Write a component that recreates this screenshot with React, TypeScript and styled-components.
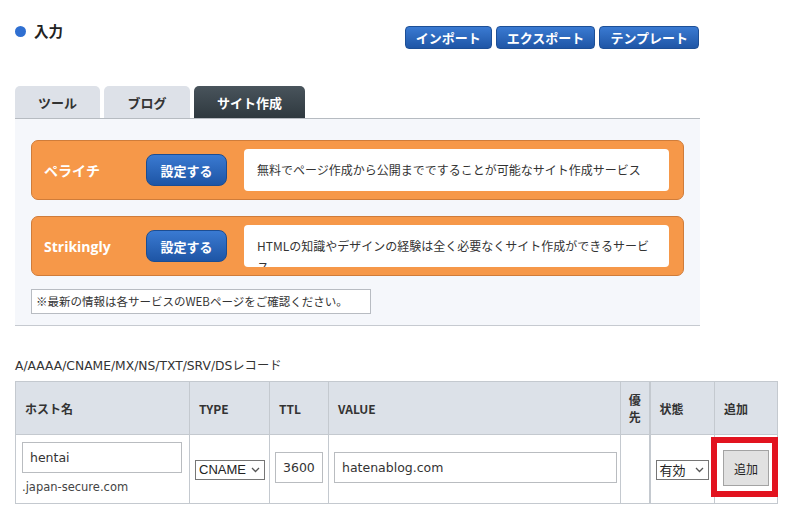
import React from 'react';
import styled, { createGlobalStyle } from 'styled-components';

const GlobalStyle = createGlobalStyle`
  body {
    margin: 0;
    background: #ffffff;
    font-family: 'DejaVu Sans', 'Noto Sans CJK JP', sans-serif;
    color: #333333;
  }
`;

const jp = `'Noto Sans CJK JP', 'DejaVu Sans', sans-serif`;

const services = [
  {
    name: 'ペライチ',
    latin: false,
    text: '無料でページ作成から公開までですることが可能なサイト作成サービス',
  },
  {
    name: 'Strikingly',
    latin: true,
    text: 'HTMLの知識やデザインの経験は全く必要なくサイト作成ができるサービス',
  },
];

const Chevron = () => (
  <svg width="9" height="6" viewBox="0 0 9 6">
    <polyline points="1,1 4.5,4.5 8,1" fill="none" stroke="#555" strokeWidth="1.3" />
  </svg>
);

export default function App() {
  return (
    <Page>
      <GlobalStyle />
      <HeaderRow>
        <Title>
          <Dot />
          入力
        </Title>
        <ButtonGroup>
          <BlueButton>インポート</BlueButton>
          <BlueButton>エクスポート</BlueButton>
          <BlueButton>テンプレート</BlueButton>
        </ButtonGroup>
      </HeaderRow>

      <TabBar>
        <Tab $w={85}>ツール</Tab>
        <Tab $w={86}>ブログ</Tab>
        <Tab $w={111} $active>
          サイト作成
        </Tab>
      </TabBar>

      <Panel>
        {services.map((s) => (
          <ServiceCard key={s.name}>
            <ServiceName $latin={s.latin}>{s.name}</ServiceName>
            <SetupButton>設定する</SetupButton>
            <Description>{s.text}</Description>
          </ServiceCard>
        ))}
        <Note>※最新の情報は各サービスのWEBページをご確認ください。</Note>
      </Panel>

      <RecordLabel>A/AAAA/CNAME/MX/NS/TXT/SRV/DSレコード</RecordLabel>

      <RecordTable>
        <colgroup>
          <col style={{ width: 174 }} />
          <col style={{ width: 80 }} />
          <col style={{ width: 59 }} />
          <col style={{ width: 292 }} />
          <col style={{ width: 29 }} />
          <col style={{ width: 65 }} />
          <col style={{ width: 63 }} />
        </colgroup>
        <thead>
          <tr>
            <Th>ホスト名</Th>
            <Th>TYPE</Th>
            <Th>TTL</Th>
            <Th>VALUE</Th>
            <Th $center $narrow>
              優<br />先
            </Th>
            <Th>状態</Th>
            <Th>追加</Th>
          </tr>
        </thead>
        <tbody>
          <tr>
            <HostCell>
              <TextInput $w={160}>hentai</TextInput>
              <Domain>.japan-secure.com</Domain>
            </HostCell>
            <Td>
              <SelectBox $w={70}>
                <span>CNAME</span>
                <Chevron />
              </SelectBox>
            </Td>
            <Td>
              <TextInput $w={48} $raised>
                3600
              </TextInput>
            </Td>
            <Td>
              <TextInput $w={283} $raised>
                hatenablog.com
              </TextInput>
            </Td>
            <Td $narrow />
            <Td>
              <SelectBox $w={53} $jp>
                <span>有効</span>
                <Chevron />
              </SelectBox>
            </Td>
            <Td $center>
              <Marked>
                <AddButton>追加</AddButton>
                <RedFrame />
              </Marked>
            </Td>
          </tr>
        </tbody>
      </RecordTable>
    </Page>
  );
}

const Page = styled.div`
  width: 794px;
  height: 520px;
  padding: 24px 0 0 15px;
  box-sizing: border-box;
  overflow: hidden;
`;

const HeaderRow = styled.div`
  display: flex;
  justify-content: space-between;
  align-items: flex-start;
  width: 684px;
`;

const Title = styled.div`
  display: flex;
  align-items: center;
  gap: 8px;
  font-family: ${jp};
  font-weight: 700;
  font-size: 14.5px;
  line-height: 14px;
  color: #222;
`;

const Dot = styled.span`
  width: 11px;
  height: 11px;
  border-radius: 50%;
  background: #2f6fd1;
`;

const ButtonGroup = styled.div`
  display: flex;
  gap: 4px;
  margin-top: 2px;
`;

const BlueButton = styled.button`
  height: 23px;
  padding: 0 10px;
  border: 1px solid #1d4f96;
  border-radius: 4px;
  background: linear-gradient(#3a7ad2, #1f56a6);
  color: #ffffff;
  font-family: ${jp};
  font-weight: 700;
  font-size: 13px;
  line-height: 20px;
  cursor: pointer;
`;

const TabBar = styled.div`
  display: flex;
  gap: 4px;
  margin-top: 37px;
  width: 685px;
  border-bottom: 1px solid #b6bbc1;
`;

const Tab = styled.div<{ $w: number; $active?: boolean }>`
  width: ${(p) => p.$w}px;
  height: 32px;
  display: flex;
  align-items: center;
  justify-content: center;
  border-radius: 5px 5px 0 0;
  background: ${(p) => (p.$active ? 'linear-gradient(#49545c, #2f393f)' : '#dde1e8')};
  color: ${(p) => (p.$active ? '#ffffff' : '#333333')};
  font-family: ${jp};
  font-weight: 700;
  font-size: 13px;
`;

const Panel = styled.div`
  width: 685px;
  box-sizing: border-box;
  background: #f5f7fb;
  padding: 21px 16px 11px;
  border-bottom: 1px solid #c6cad0;
  display: flex;
  flex-direction: column;
  gap: 16px;
`;

const ServiceCard = styled.div`
  height: 60px;
  box-sizing: border-box;
  display: flex;
  align-items: center;
  background: #f69849;
  border: 1px solid #cf7c3a;
  border-radius: 7px;
  padding: 0 14px 0 12px;
`;

const ServiceName = styled.div<{ $latin: boolean }>`
  width: 102px;
  color: #ffffff;
  font-family: ${(p) => (p.$latin ? `'Open Sans', ${jp}` : jp)};
  font-weight: 700;
  font-size: 14px;
`;

const SetupButton = styled.button`
  width: 81px;
  height: 32px;
  border: 1px solid #1c4d92;
  border-radius: 8px;
  background: linear-gradient(#3a7ad2, #1e55a5);
  color: #ffffff;
  font-family: ${jp};
  font-weight: 700;
  font-size: 13px;
  padding: 0;
  cursor: pointer;
`;

const Description = styled.div`
  margin-left: 17px;
  flex: 1;
  height: 42px;
  box-sizing: border-box;
  background: #ffffff;
  border-radius: 4px;
  padding: 10px 12px 0 13px;
  font-family: ${jp};
  font-size: 12px;
  line-height: 21px;
  color: #333;
  overflow: hidden;
`;

const Note = styled.div`
  margin-top: -3px;
  align-self: flex-start;
  width: 340px;
  height: 25px;
  box-sizing: border-box;
  border: 1px solid #b8bcc2;
  background: #ffffff;
  padding: 0 4px;
  font-family: ${jp};
  font-size: 11.5px;
  line-height: 23px;
  color: #333;
  white-space: nowrap;
`;

const RecordLabel = styled.div`
  margin-top: 32px;
  font-size: 12.3px;
  line-height: 16px;
  color: #333;
  margin-bottom: 7px;
`;

const RecordTable = styled.table`
  width: 762px;
  border-collapse: collapse;
  table-layout: fixed;
`;

const Th = styled.th<{ $center?: boolean; $narrow?: boolean }>`
  height: 53px;
  box-sizing: border-box;
  padding: 0 ${(p) => (p.$narrow ? 0 : 9)}px;
  background: #dce1e8;
  border: 1px solid #c4c9cf;
  border-right-width: ${(p) => (p.$narrow ? 2 : 1)}px;
  text-align: ${(p) => (p.$center ? 'center' : 'left')};
  font-family: ${jp};
  font-weight: 700;
  font-size: 12px;
  line-height: 17px;
  color: #333;
`;

const Td = styled.td<{ $center?: boolean; $narrow?: boolean }>`
  height: 69px;
  box-sizing: border-box;
  padding: ${(p) => (p.$center ? '0' : '0 4px 0 5px')};
  border: 1px solid #c4c9cf;
  border-right-width: ${(p) => (p.$narrow ? 2 : 1)}px;
  text-align: ${(p) => (p.$center ? 'center' : 'left')};
  vertical-align: middle;
`;

const HostCell = styled.td`
  height: 69px;
  box-sizing: border-box;
  padding: 7px 6px 0 6px;
  border: 1px solid #c4c9cf;
  vertical-align: top;
`;

const TextInput = styled.div<{ $w: number; $raised?: boolean }>`
  width: ${(p) => p.$w}px;
  height: 31px;
  box-sizing: border-box;
  border: 1px solid #b9bcc0;
  background: #ffffff;
  padding: 0 7px;
  margin-bottom: ${(p) => (p.$raised ? 4 : 0)}px;
  font-size: 12.5px;
  line-height: 29px;
  color: #333;
  white-space: nowrap;
  overflow: hidden;
`;

const Domain = styled.div`
  margin-top: 7px;
  font-size: 11.5px;
  color: #444;
`;

const SelectBox = styled.div<{ $w: number; $jp?: boolean }>`
  width: ${(p) => p.$w}px;
  height: 20px;
  box-sizing: border-box;
  display: flex;
  align-items: center;
  justify-content: space-between;
  border: 1px solid #767676;
  background: #ffffff;
  padding: 0 4px 0 3px;
  font-family: ${(p) => (p.$jp ? jp : `'Liberation Sans', sans-serif`)};
  font-size: 13px;
  color: #222;
  margin-top: 1px;
`;

const Marked = styled.span`
  position: relative;
  display: inline-block;
  margin-bottom: 2px;
`;

const AddButton = styled.button`
  width: 46px;
  height: 36px;
  border: 1px solid #a3a3a3;
  background: #e1e1e1;
  font-family: ${jp};
  font-size: 12px;
  color: #222;
  padding: 0;
  display: block;
`;

const RedFrame = styled.span`
  position: absolute;
  left: -12px;
  top: -13px;
  right: -9px;
  bottom: -11px;
  border: 6px solid #e2131f;
  pointer-events: none;
`;
